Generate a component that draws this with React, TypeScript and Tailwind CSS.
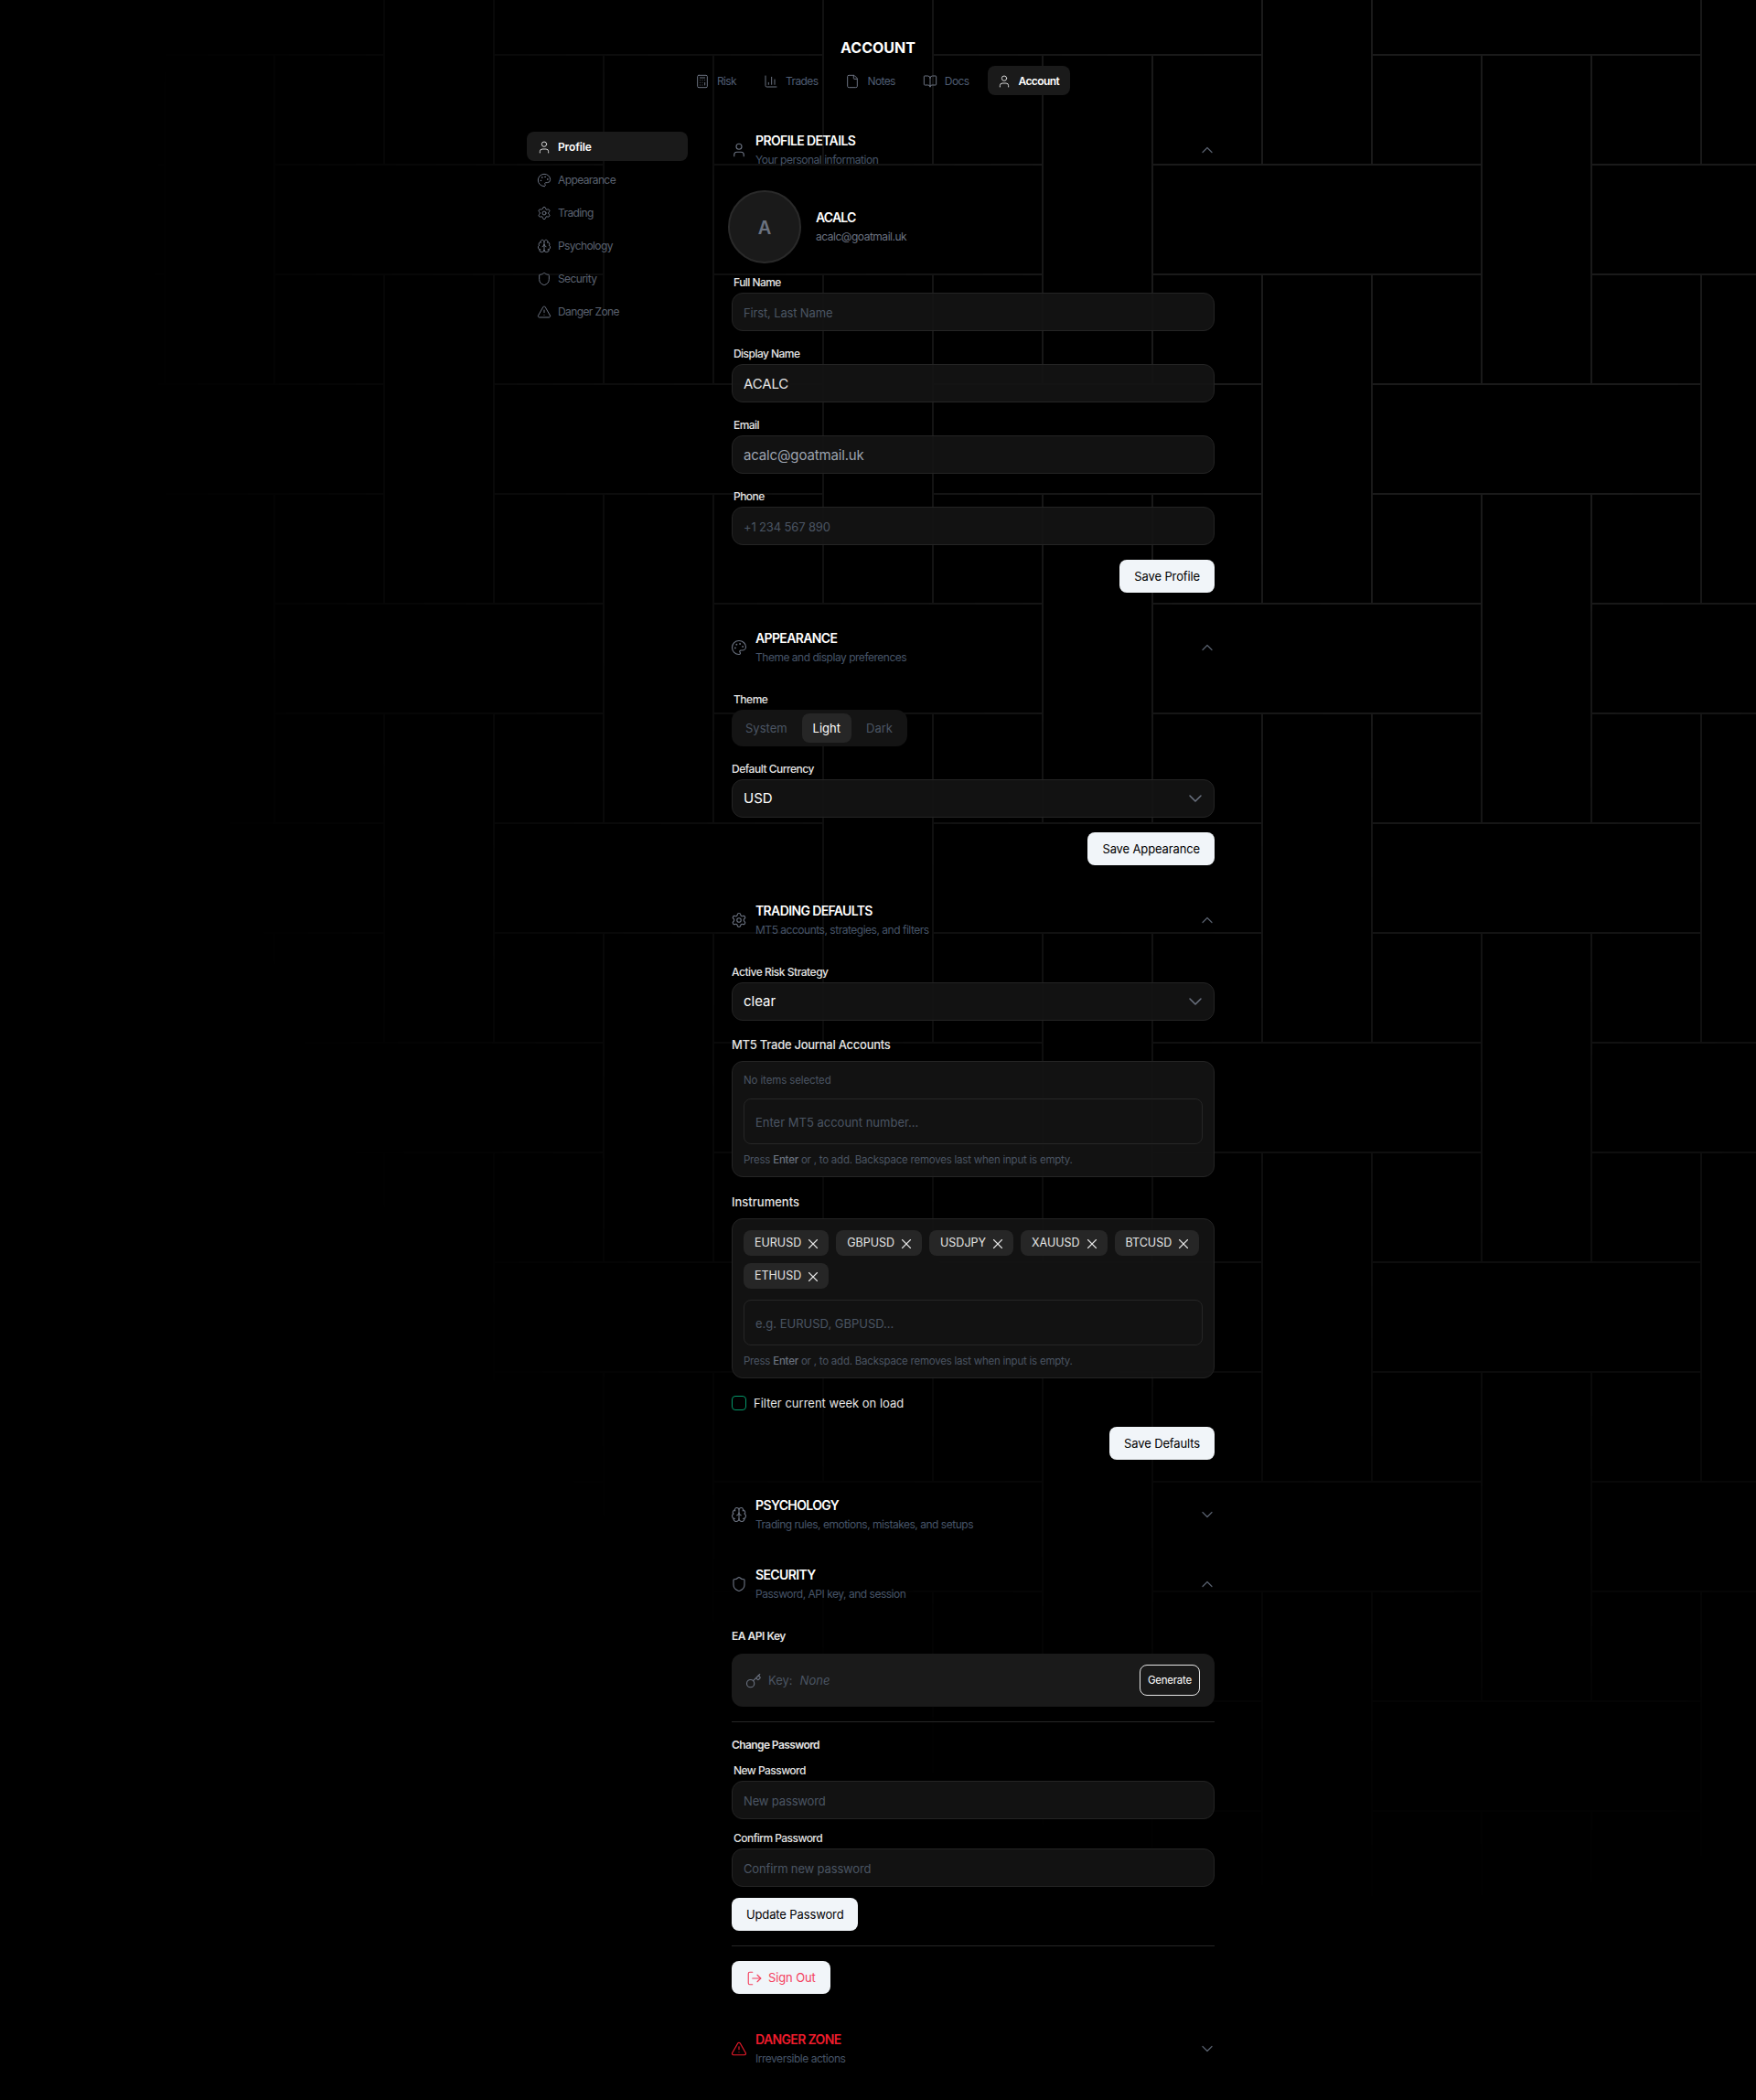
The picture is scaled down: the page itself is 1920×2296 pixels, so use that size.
import React from "react";
import {
  BookOpen,
  Brain,
  Calculator,
  ChartColumn,
  ChevronDown,
  ChevronUp,
  File,
  Key,
  LogOut,
  Palette,
  Settings,
  Shield,
  TriangleAlert,
  User,
  X,
} from "lucide-react";

const tabs = [
  { icon: Calculator, label: "Risk" },
  { icon: ChartColumn, label: "Trades" },
  { icon: File, label: "Notes" },
  { icon: BookOpen, label: "Docs" },
  { icon: User, label: "Account", active: true },
];

const sideItems = [
  { icon: User, label: "Profile", active: true },
  { icon: Palette, label: "Appearance" },
  { icon: Settings, label: "Trading" },
  { icon: Brain, label: "Psychology" },
  { icon: Shield, label: "Security" },
  { icon: TriangleAlert, label: "Danger Zone" },
];

const instruments = ["EURUSD", "GBPUSD", "USDJPY", "XAUUSD", "BTCUSD", "ETHUSD"];

const SectionHeader = ({
  icon: Icon,
  title,
  subtitle,
  open,
  danger,
}: {
  icon: React.ElementType;
  title: string;
  subtitle: string;
  open?: boolean;
  danger?: boolean;
}) => (
  <div className="flex items-center">
    <Icon
      size={18}
      strokeWidth={1.5}
      className={danger ? "text-[#ef1c2c] -ml-px" : "text-[#6b7280] -ml-px"}
    />
    <div className="ml-[9px] flex-1">
      <h2
        className={
          danger
            ? "text-sm leading-5 font-semibold tracking-[-0.045em] text-[#ef1c2c] uppercase"
            : "text-sm leading-5 font-semibold tracking-[-0.045em] text-white uppercase"
        }
      >
        {title}
      </h2>
      <p className="mt-[3px] text-xs leading-4 tracking-[-0.04em] text-[#475569]">{subtitle}</p>
    </div>
    {open ? (
      <ChevronUp size={20} strokeWidth={1.5} className="text-[#565e6b] -mr-0.5" />
    ) : (
      <ChevronDown size={20} strokeWidth={1.5} className="text-[#565e6b] -mr-0.5" />
    )}
  </div>
);

const Field = ({
  label,
  placeholder,
  value,
  dim,
  className,
}: {
  label: string;
  placeholder?: string;
  value?: string;
  dim?: boolean;
  className?: string;
}) => (
  <div className={className}>
    <label className="block mb-[3px] px-0.5 text-xs leading-4 font-medium tracking-[-0.045em] text-[#e5e5e5]">
      {label}
    </label>
    <input
      readOnly
      placeholder={placeholder}
      value={value}
      className={
        (dim ? "text-[#9ca3af] " : "text-[#e5e5e5] ") +
        "block w-full h-[42px] px-3 rounded-xl border border-[#242424] bg-[#141414]/90 text-[15px] tracking-[-0.01em] outline-none placeholder:text-[13px] placeholder:text-[#4b5563]"
      }
    />
  </div>
);

const SelectBox = ({ label, value }: { label: string; value: string }) => (
  <div>
    <label className="block mb-[3px] text-xs leading-4 font-medium tracking-[-0.04em] text-[#e5e5e5]">{label}</label>
    <div className="flex items-center justify-between h-[42px] px-3 rounded-xl border border-[#242424] bg-[#141414]/90 text-[15px] text-white">
      {value}
      <ChevronDown size={24} strokeWidth={1.5} className="text-[#6b7280] -mr-1" />
    </div>
  </div>
);

const SaveButton = ({
  children,
  danger,
}: {
  children: React.ReactNode;
  danger?: boolean;
}) => (
  <button
    className={
      (danger ? "text-[#f43f5e] gap-1.5 " : "text-black gap-2 ") +
      "h-9 px-4 pt-px rounded-lg bg-[#f1f5f9] text-[13px] tracking-[-0.01em] flex items-center"
    }
  >
    {children}
  </button>
);

const Hint = () => (
  <p className="mt-[9px] text-[11.5px] leading-4 tracking-[-0.02em] text-[#4b5563]">
    Press <span className="font-medium text-[#6b7280]">Enter</span> or , to add. Backspace removes last when input is
    empty.
  </p>
);

const InnerInput = ({ placeholder }: { placeholder: string }) => (
  <input
    readOnly
    placeholder={placeholder}
    className="block w-full h-[50px] px-3 pt-px rounded-lg border border-[#262626] bg-transparent text-[13px] outline-none placeholder:text-[#4b5563]"
  />
);

export default function App() {
  return (
    <div className="relative min-h-[2296px] bg-black font-['Inter',sans-serif] overflow-hidden">
      {/* background weave */}
      <svg className="absolute inset-0 w-full h-full [mask-image:radial-gradient(ellipse_1400px_1800px_at_1550px_300px,black_20%,transparent_100%)]">
        <defs>
          <pattern id="weave" width="480" height="480" patternUnits="userSpaceOnUse">
            <path
              d="M60 60H420M60 420H420M0 180H180M300 180H480M0 300H180M300 300H480M60 0V180M60 300V480M420 0V180M420 300V480M180 60V420M300 60V420"
              fill="none"
              stroke="#1a1a1a"
              strokeWidth="2"
            />
          </pattern>
        </defs>
        <rect width="100%" height="100%" fill="url(#weave)" />
      </svg>

      <div className="relative pt-10 pb-[37px]">
        <h1 className="text-center text-base leading-6 font-bold text-white">ACCOUNT</h1>

        <nav className="mt-2 flex justify-center gap-2">
          {tabs.map((tab) => {
            const Icon = tab.icon;
            return (
              <div
                key={tab.label}
                className={
                  tab.active
                    ? "flex items-center gap-2 h-8 pl-2.5 pr-3 pt-px rounded-lg bg-[#1a1a1a] text-xs font-semibold tracking-[-0.05em] text-white"
                    : "flex items-center gap-2 h-8 pl-2.5 pr-3 pt-px rounded-lg text-xs tracking-[-0.05em] text-[#4f5d73]"
                }
              >
                <Icon size={16} strokeWidth={1.5} className={tab.active ? "text-[#d4d4d4]" : "text-[#6b7280]"} />
                {tab.label}
              </div>
            );
          })}
        </nav>

        <div className="mt-10 mx-auto w-[768px] flex">
          <aside className="w-44 shrink-0 flex flex-col gap-1">
            {sideItems.map((item) => {
              const Icon = item.icon;
              return (
                <div
                  key={item.label}
                  className={
                    item.active
                      ? "flex items-center gap-[7px] h-8 pl-[11px] pr-3 pt-px rounded-lg bg-[#1a1a1a] text-xs font-semibold tracking-[-0.01em] text-white"
                      : "flex items-center gap-[7px] h-8 pl-[11px] pr-3 pt-px rounded-lg text-xs tracking-[-0.05em] text-[#5b6270]"
                  }
                >
                  <Icon size={16} strokeWidth={1.5} className={item.active ? "text-[#d4d4d4]" : "text-[#6b7280]"} />
                  {item.label}
                </div>
              );
            })}
          </aside>

          <main className="ml-12 w-[528px]">
            {/* Profile */}
            <SectionHeader icon={User} title="Profile Details" subtitle="Your personal information" open />
            <div className="mt-[25px] -ml-1 flex items-center gap-4">
              <div className="w-20 h-20 pt-px rounded-full border-2 border-[#2a2a2a] bg-[#1a1a1a] flex items-center justify-center text-xl font-semibold text-[#6b7280]">
                A
              </div>
              <div className="-mt-px">
                <p className="text-sm leading-5 font-semibold tracking-[-0.06em] text-white">ACALC</p>
                <p className="mt-[3px] text-xs leading-4 tracking-[-0.04em] text-[#6b7280]">acalc@goatmail.uk</p>
              </div>
            </div>
            <Field className="mt-[13px]" label="Full Name" placeholder="First, Last Name" />
            <Field className="mt-[17px]" label="Display Name" value="ACALC" />
            <Field className="mt-[17px]" label="Email" value="acalc@goatmail.uk" dim />
            <Field className="mt-[17px]" label="Phone" placeholder="+1 234 567 890" />
            <div className="mt-4 flex justify-end">
              <SaveButton>Save Profile</SaveButton>
            </div>

            {/* Appearance */}
            <div className="mt-10">
              <SectionHeader icon={Palette} title="Appearance" subtitle="Theme and display preferences" open />
            </div>
            <div className="mt-[30px]">
              <label className="block mb-[3px] px-0.5 text-xs leading-4 font-medium tracking-[-0.04em] text-[#e5e5e5]">
                Theme
              </label>
              <div className="inline-flex gap-1 p-1 h-10 rounded-xl bg-[#141414] text-[13px]">
                <span className="flex items-center pl-[11px] pr-3 pt-px text-[#4b5563]">System</span>
                <span className="flex items-center px-3 pt-px rounded-lg bg-[#262626] text-white">Light</span>
                <span className="flex items-center px-3 pt-px text-[#4b5563]">Dark</span>
              </div>
            </div>
            <div className="mt-[17px]">
              <SelectBox label="Default Currency" value="USD" />
            </div>
            <div className="mt-4 flex justify-end">
              <SaveButton>Save Appearance</SaveButton>
            </div>

            {/* Trading */}
            <div className="mt-10">
              <SectionHeader icon={Settings} title="Trading Defaults" subtitle="MT5 accounts, strategies, and filters" open />
            </div>
            <div className="mt-[30px]">
              <SelectBox label="Active Risk Strategy" value="clear" />
            </div>
            <h3 className="mt-4 mb-2 text-[13px] leading-5 font-medium tracking-[-0.02em] text-[#e5e5e5]">
              MT5 Trade Journal Accounts
            </h3>
            <div className="px-3 pt-3 pb-2.5 rounded-xl border border-[#242424] bg-[#141414]/90">
              <p className="mb-3 pt-px -mt-px text-[11.5px] leading-4 tracking-[-0.01em] text-[#4b5563]">
                No items selected
              </p>
              <InnerInput placeholder="Enter MT5 account number..." />
              <Hint />
            </div>
            <h3 className="mt-[17px] mb-2 text-[13px] leading-5 font-medium text-[#e5e5e5]">Instruments</h3>
            <div className="px-3 pt-3 pb-2.5 rounded-xl border border-[#242424] bg-[#141414]/90">
              <div className="mb-3 flex flex-wrap gap-2">
                {instruments.map((name) => (
                  <span
                    key={name}
                    className="flex items-center gap-1 h-7 pl-3 pr-2 pt-px rounded-lg bg-[#262626] text-[12.5px] text-[#e5e5e5]"
                  >
                    {name}
                    <X size={18} strokeWidth={1.5} />
                  </span>
                ))}
              </div>
              <InnerInput placeholder="e.g. EURUSD, GBPUSD..." />
              <Hint />
            </div>
            <div className="mt-[19px] flex items-center gap-2">
              <span className="w-4 h-4 rounded border border-[#059669]" />
              <span className="text-[13px] leading-4 text-[#e5e5e5]">Filter current week on load</span>
            </div>
            <div className="mt-[18px] flex justify-end">
              <SaveButton>Save Defaults</SaveButton>
            </div>

            {/* Psychology */}
            <div className="mt-10">
              <SectionHeader icon={Brain} title="Psychology" subtitle="Trading rules, emotions, mistakes, and setups" />
            </div>

            {/* Security */}
            <div className="mt-[37px]">
              <SectionHeader icon={Shield} title="Security" subtitle="Password, API key, and session" open />
            </div>
            <p className="mt-[30px] mb-[11px] text-xs leading-4 font-semibold tracking-[-0.04em] text-[#e5e5e5]">
              EA API Key
            </p>
            <div className="flex items-center justify-between h-[58px] pl-[15px] pr-4 rounded-xl bg-[#1a1a1a]">
              <div className="flex items-center pt-px text-[13px] text-[#4b5563]">
                <Key size={18} strokeWidth={1.5} className="text-[#6b7280] mr-[7px]" />
                <span>Key:</span>
                <span className="ml-2 italic">None</span>
              </div>
              <button className="h-[34px] px-2 pt-px rounded-lg border border-[#e5e5e5] text-[11.5px] tracking-[-0.02em] text-white">
                Generate
              </button>
            </div>
            <div className="mt-4 border-t border-[#262626]" />
            <p className="mt-[17px] text-xs leading-4 font-semibold tracking-[-0.05em] text-[#e5e5e5]">Change Password</p>
            <Field className="mt-3" label="New Password" placeholder="New password" />
            <Field className="mt-[13px]" label="Confirm Password" placeholder="Confirm new password" />
            <div className="mt-3 flex">
              <SaveButton>Update Password</SaveButton>
            </div>
            <div className="mt-4 border-t border-[#262626]" />
            <div className="mt-4 flex">
              <SaveButton danger>
                <LogOut size={18} strokeWidth={1.5} />
                Sign Out
              </SaveButton>
            </div>

            {/* Danger */}
            <div className="mt-10">
              <SectionHeader icon={TriangleAlert} title="Danger Zone" subtitle="Irreversible actions" danger />
            </div>
          </main>
        </div>
      </div>
    </div>
  );
}
